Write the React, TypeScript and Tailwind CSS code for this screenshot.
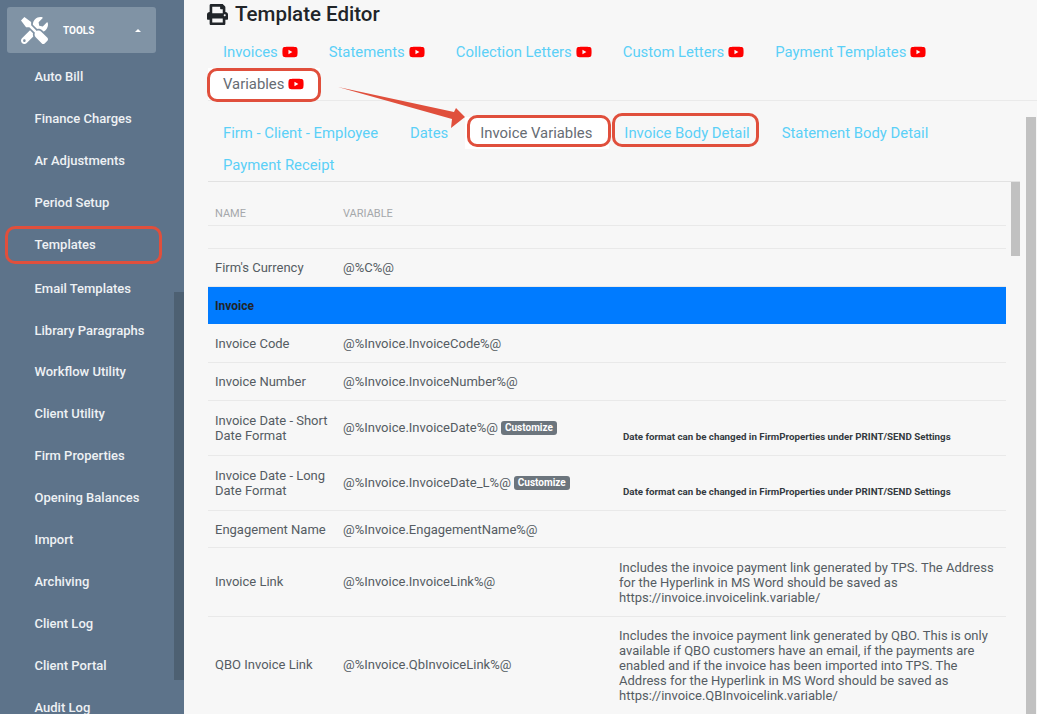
import { FaPrint, FaTools, FaYoutube } from 'react-icons/fa';

const sideItems = [
  'Auto Bill',
  'Finance Charges',
  'Ar Adjustments',
  'Period Setup',
  'Templates',
  'Email Templates',
  'Library Paragraphs',
  'Workflow Utility',
  'Client Utility',
  'Firm Properties',
  'Opening Balances',
  'Import',
  'Archiving',
  'Client Log',
  'Client Portal',
  'Audit Log',
];

const topTabs = ['Invoices', 'Statements', 'Collection Letters', 'Custom Letters', 'Payment Templates'];
const subTabs = ['Firm - Client - Employee', 'Dates', 'Invoice Variables', 'Invoice Body Detail', 'Statement Body Detail', 'Payment Receipt'];
const dateNote = 'Date format can be changed in FirmProperties under PRINT/SEND Settings';

function Row({ name, variable, note, height, badge }: { name: string; variable: string; note?: string; height: string; badge?: boolean }) {
  const isDate = note === dateNote;
  return (
    <div className={`grid grid-cols-[135px_276px_1fr] items-center border-b border-[#e9e9e9] text-[13px] leading-[15px] text-[#555c63] ${height}`}>
      <div className={`pr-1 pl-[7px] ${note && !isDate ? '-mt-[2px]' : ''}`}>{name}</div>
      <div className={`flex items-center gap-[3px] ${note ? '-mt-[2px]' : ''}`}>
        {variable}
        {badge && <span className="mt-[1px] rounded-[3px] bg-[#6c757d] px-[4px] py-[1px] text-[10px] leading-[12px] font-bold text-white">Customize</span>}
      </div>
      <div className="pr-2">
        {isDate ? <div className="mt-[16px] pl-1 text-[9.75px] font-bold whitespace-nowrap text-[#343a40]">{note}</div> : note}
      </div>
    </div>
  );
}

export default function App() {
  return (
    <div className="relative flex h-[714px] w-[1037px] overflow-hidden bg-[#f7f7f7] font-['Roboto',sans-serif]">
      <aside className="relative h-full w-[184px] shrink-0 bg-[#5d738a]">
        <div className="px-[7px] pt-[7px]">
          <div className="flex h-[46px] w-[149px] items-center rounded-[3px] bg-[#8093a5] pl-[14px] text-white">
            <FaTools className="size-[27px]" />
            <span className="ml-[15px] text-[10px] font-bold">TOOLS</span>
            <span className="ml-[41px] h-0 w-0 border-x-[3.5px] border-b-[3.5px] border-x-transparent border-b-white" />
          </div>
        </div>
        <nav className="mt-[3px] flex flex-col">
          {sideItems.map((item) => (
            <div
              key={item}
              className={`flex h-[41.9px] shrink-0 items-center pl-[34.5px] text-[13px] font-medium text-[#eef1f4] ${item === 'Templates' ? 'mb-[2px]' : ''}`}
            >
              {item}
            </div>
          ))}
        </nav>
        <div className="absolute top-[292px] right-0 h-[388px] w-[10px] bg-[#4d6072]" />
      </aside>

      <main className="min-w-0 flex-1 pt-[1px] pl-[24px]">
        <h1 className="-ml-[1px] flex h-[26px] items-center gap-[7px] text-[20.5px] font-medium text-[#212529]">
          <FaPrint className="size-[21px]" />
          Template Editor
        </h1>

        <div className="mt-[9px] flex h-[65px] flex-wrap content-start border-b border-[#eaeaea]">
          {topTabs.map((tab) => (
            <div key={tab} className="flex h-[32px] items-center gap-[4px] pr-[16px] pl-[15px] text-[14.85px] text-[#5bd0f7]">
              {tab}
              <FaYoutube className="size-[16px] text-[#ff0000]" />
            </div>
          ))}
          <div className="flex h-[32px] items-center gap-[4px] bg-white pr-[16px] pl-[15px] text-[14.85px] text-[#666c73]">
            Variables
            <FaYoutube className="size-[16px] text-[#ff0000]" />
          </div>
        </div>

        <div className="mt-[16px] flex h-[65px] w-[812px] flex-wrap content-start border-b border-[#e2e2e2]">
          {subTabs.map((tab) => (
            <div
              key={tab}
              className={`flex h-[32px] items-center pr-[17px] pl-[15px] text-[14.85px] ${tab === 'Invoice Variables' ? 'bg-white text-[#666c73]' : 'text-[#5bd0f7]'}`}
            >
              {tab}
            </div>
          ))}
        </div>

        <div className="w-[798px]">
          <div className="grid h-[44px] grid-cols-[135px_1fr] items-end border-b border-[#e9e9e9] pb-[3px] text-[11px] text-[#a5a8ab]">
            <div className="pl-[7px]">NAME</div>
            <div>VARIABLE</div>
          </div>
          <div className="h-[23px] border-b border-[#e9e9e9]" />
          <Row name="Firm's Currency" variable="@%C%@" height="h-[38px]" />
          <div className="flex h-[37px] items-center bg-[#007bff] pl-[7px] text-[12px] font-bold text-[#212529]">Invoice</div>
          <Row name="Invoice Code" variable="@%Invoice.InvoiceCode%@" height="h-[39px]" />
          <Row name="Invoice Number" variable="@%Invoice.InvoiceNumber%@" height="h-[38px]" />
          <Row name="Invoice Date - Short Date Format" variable="@%Invoice.InvoiceDate%@" badge note={dateNote} height="h-[55px]" />
          <Row name="Invoice Date - Long Date Format" variable="@%Invoice.InvoiceDate_L%@" badge note={dateNote} height="h-[55px]" />
          <Row name="Engagement Name" variable="@%Invoice.EngagementName%@" height="h-[37px]" />
          <Row
            name="Invoice Link"
            variable="@%Invoice.InvoiceLink%@"
            note="Includes the invoice payment link generated by TPS. The Address for the Hyperlink in MS Word should be saved as https://invoice.invoicelink.variable/"
            height="h-[69px]"
          />
          <Row
            name="QBO Invoice Link"
            variable="@%Invoice.QbInvoiceLink%@"
            note="Includes the invoice payment link generated by QBO. This is only available if QBO customers have an email, if the payments are enabled and if the invoice has been imported into TPS. The Address for the Hyperlink in MS Word should be saved as https://invoice.QBInvoicelink.variable/"
            height="h-[98px]"
          />
        </div>
      </main>

      {/* scrollbars */}
      <div className="absolute top-[117px] right-[1px] h-[597px] w-[10px] bg-[#c1c1c1]" />
      <div className="absolute top-[182px] left-[1011px] h-[74px] w-[9px] bg-[#c1c1c1]" />

      {/* red annotations */}
      <div className="absolute top-[68px] left-[207px] h-[34px] w-[114px] rounded-[10px] border-[3px] border-[#e04f3c]" />
      <div className="absolute top-[115px] left-[467px] h-[32px] w-[144px] rounded-[10px] border-[3px] border-[#e04f3c]" />
      <div className="absolute top-[113px] left-[612px] h-[34px] w-[147px] rounded-[10px] border-[3px] border-[#e04f3c]" />
      <div className="absolute top-[226px] left-[5px] h-[38px] w-[157px] rounded-[10px] border-[3px] border-[#e04f3c]" />
      <svg className="absolute top-[80px] left-[330px]" width="140" height="52" viewBox="0 0 140 52">
        <polygon points="8,7 124,32 126,28 135,37 121,48 122,39" fill="#e04f3c" />
      </svg>
    </div>
  );
}
